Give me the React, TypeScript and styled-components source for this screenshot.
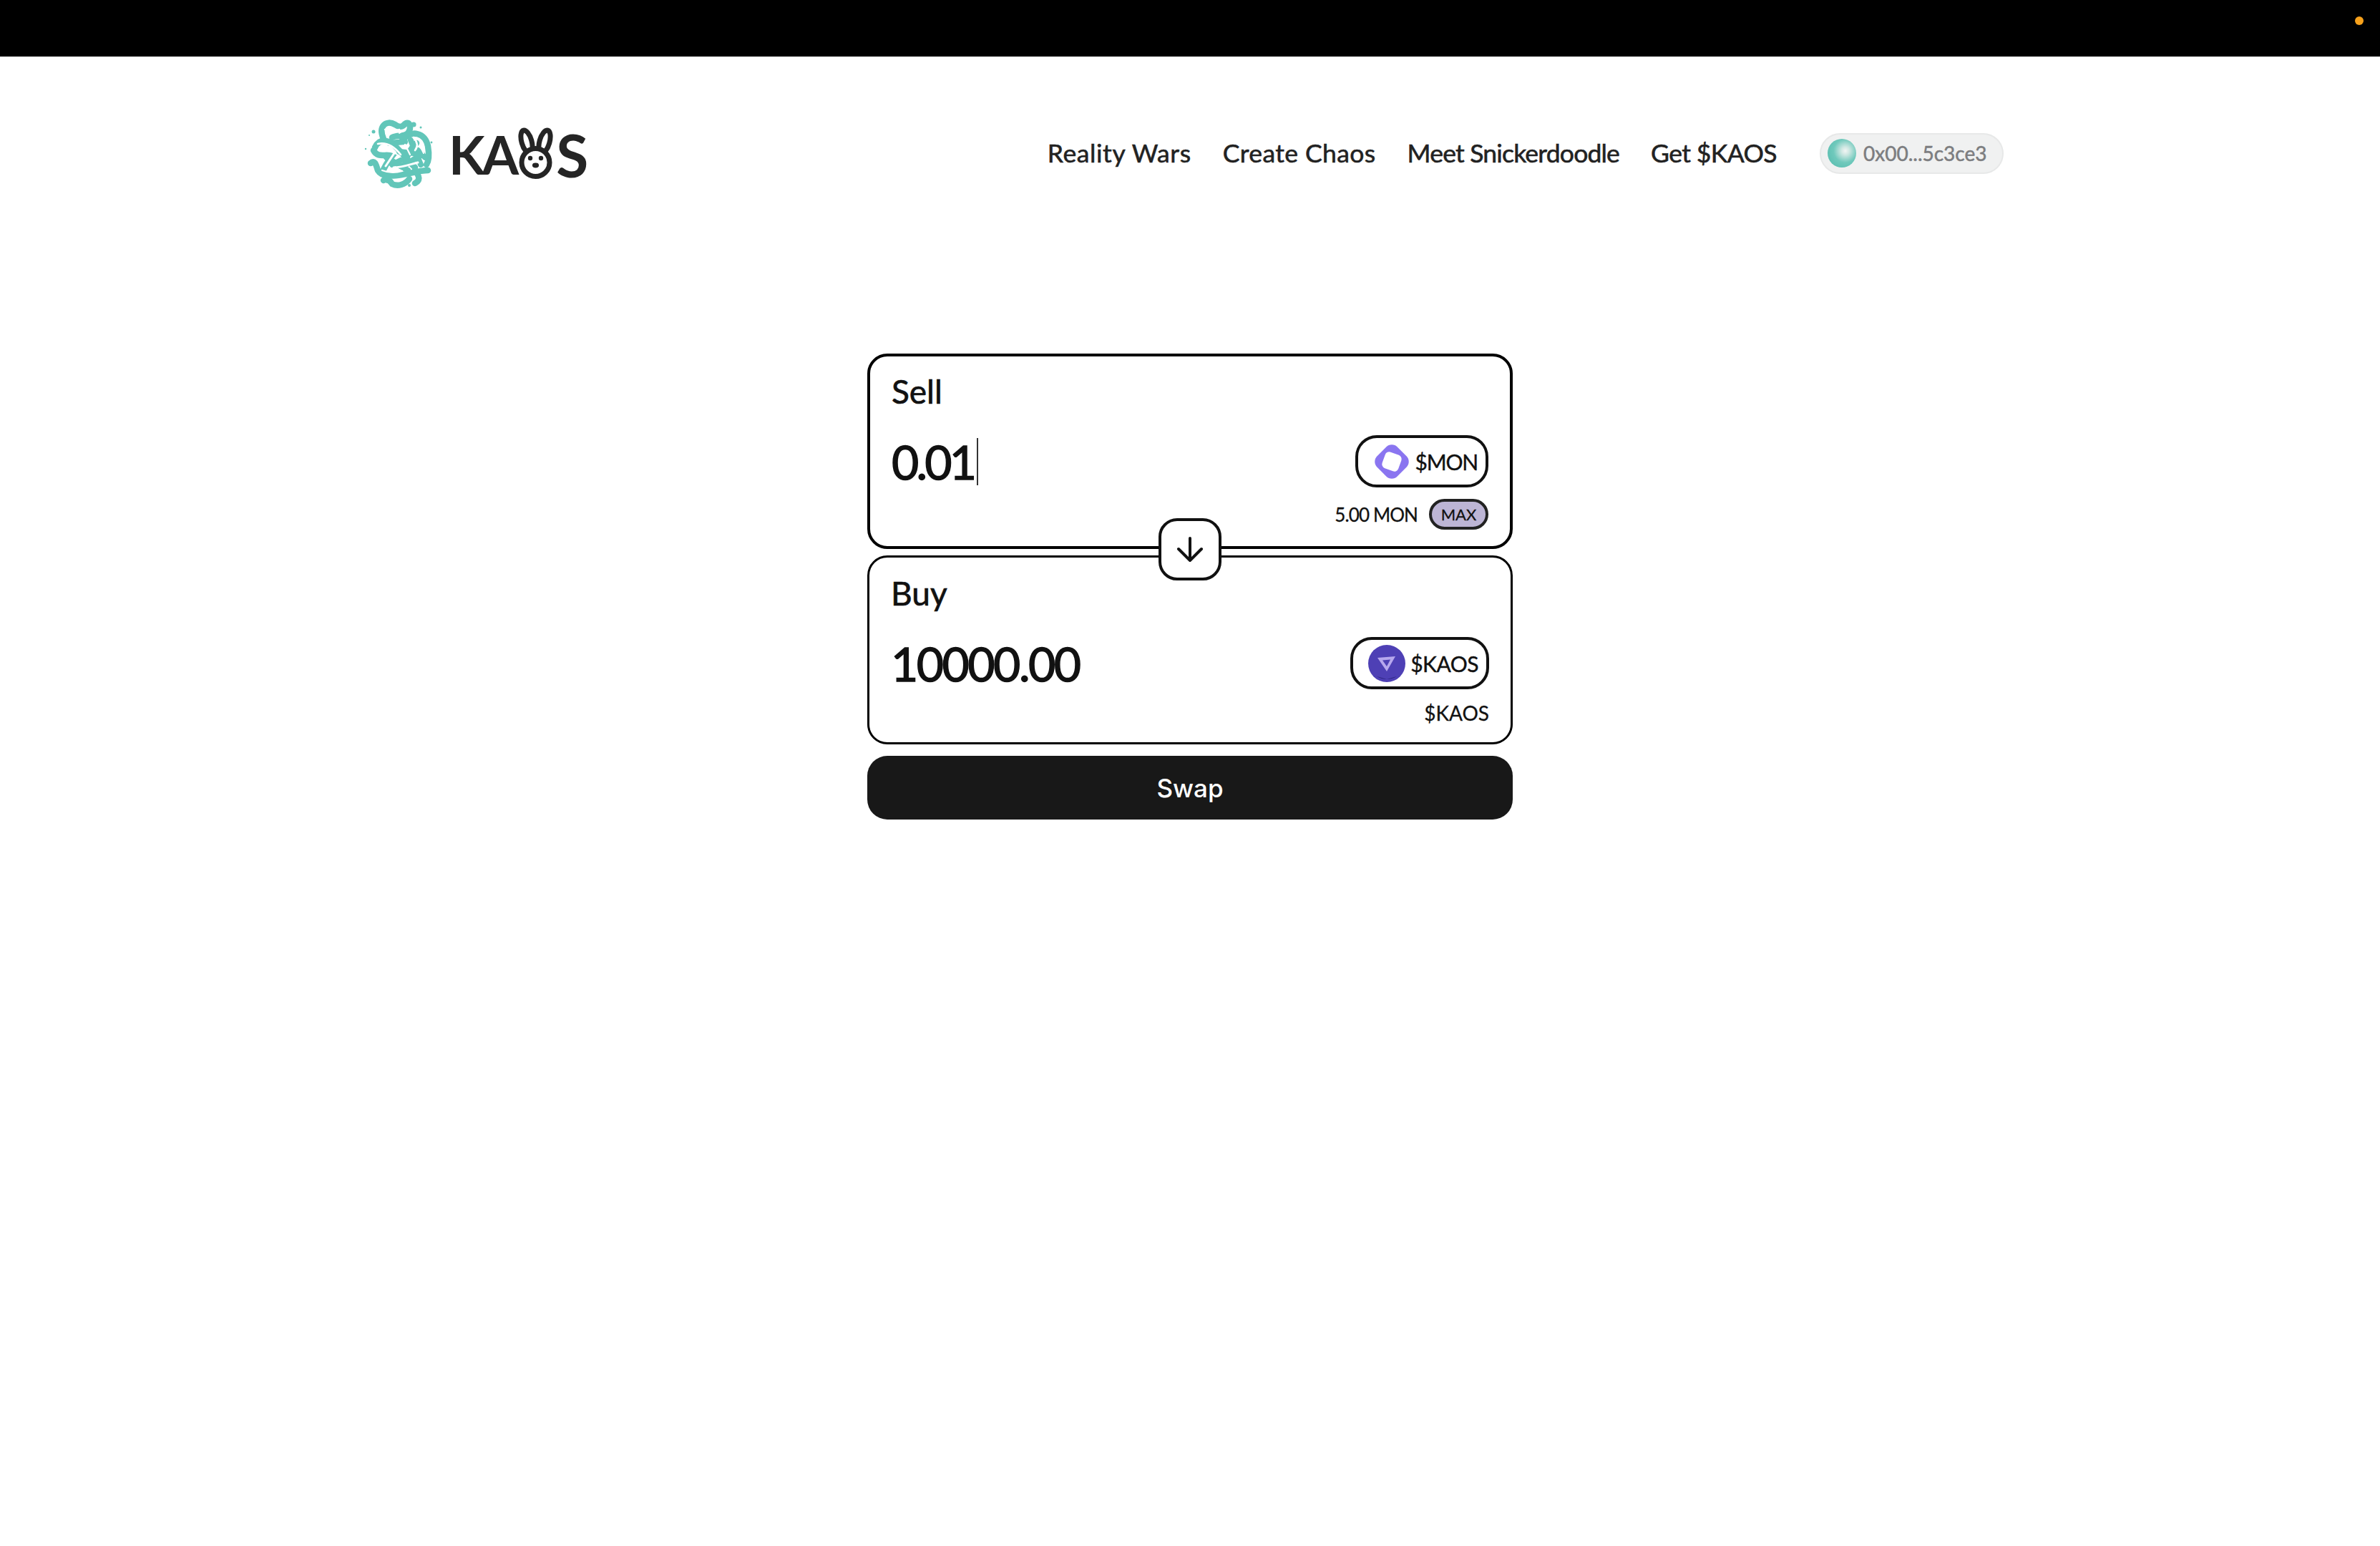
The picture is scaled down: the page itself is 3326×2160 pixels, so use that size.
import React from "react";
import styled, { createGlobalStyle } from "styled-components";

const GlobalStyle = createGlobalStyle`
	html, body {
		margin: 0;
		background: #fff;
		color: #111;
		font-family: "Lato", "Open Sans", sans-serif;
	}
	* {
		box-sizing: border-box;
	}
`;

const TopBar = styled.div`
	height: 79px;
	background: #000;
	display: flex;
	justify-content: flex-end;
	padding: 23px 23px 0 0;
`;

const StatusDot = styled.span`
	width: 12px;
	height: 12px;
	border-radius: 50%;
	background: #f7a11b;
`;

const Header = styled.header`
	display: flex;
	align-items: center;
	justify-content: space-between;
	padding: 86px 526px 0 500px;
`;

const Brand = styled.a`
	display: flex;
	align-items: center;
	height: 98px;
	color: #252525;
`;

const WordMark = styled.div`
	display: flex;
	align-items: flex-end;
	margin-left: 7px;
	height: 72px;
`;

const LogoLetters = styled.span<{ $size: number }>`
	font-family: "Lato", sans-serif;
	font-weight: 700;
	font-size: ${(p) => p.$size}px;
	line-height: 68px;
	letter-spacing: -4px;
	height: 68px;
`;

const Nav = styled.nav`
	display: flex;
	align-items: center;
	gap: 44px;
`;

const NavLink = styled.a<{ $track: number }>`
	font-size: 35.5px;
	font-weight: 400;
	letter-spacing: ${(p) => p.$track}px;
	color: #222;
	line-height: 44px;
	-webkit-text-stroke: 0.6px #222;
`;

const WalletPill = styled.button`
	display: flex;
	align-items: center;
	gap: 10px;
	width: 257px;
	height: 57px;
	margin-left: 16px;
	padding: 0 9px;
	border: 2px solid #e7e8e8;
	border-radius: 29px;
	background: #f0f1f1;
	color: #7c7d80;
	font-family: inherit;
	font-size: 28px;
	-webkit-text-stroke: 0.5px #7c7d80;
`;

const WalletAvatar = styled.span`
	width: 40px;
	height: 40px;
	border-radius: 50%;
	background: radial-gradient(circle at 62% 42%, #f2f5f4 0, #d0e8e3 16%, #70c9bc 48%, #4fb9ab 100%);
`;

const Main = styled.main`
	width: 902px;
	margin: 231px 0 0 1212px;
	display: flex;
	flex-direction: column;
	position: relative;
`;

const Card = styled.section<{ $border: number }>`
	display: flex;
	flex-direction: column;
	border: ${(p) => p.$border}px solid #000;
	border-radius: 28px;
	padding: ${(p) => 30 - p.$border}px 30px ${(p) => 27 - p.$border}px;
	background: #fff;
`;

const CardLabel = styled.div`
	font-size: 46px;
	line-height: 46px;
	color: #111;
	-webkit-text-stroke: 0.7px #111;
`;

const InputRow = styled.div`
	display: flex;
	align-items: center;
	justify-content: space-between;
	margin-top: 38px;
	height: 73px;
`;

const Amount = styled.div<{ $track: number }>`
	display: flex;
	align-items: center;
	font-size: 66px;
	line-height: 66px;
	letter-spacing: ${(p) => p.$track}px;
	color: #111;
	-webkit-text-stroke: 1.4px #111;
`;

const Caret = styled.span`
	width: 2px;
	height: 66px;
	margin-left: 4px;
	background: #333;
`;

const TokenPill = styled.button<{ $track: number }>`
	display: flex;
	align-items: center;
	gap: 7px;
	height: 73px;
	padding: 0 11px 0 21px;
	border: 4px solid #111;
	border-radius: 30px;
	background: #fff;
	color: #111;
	font-family: inherit;
	font-size: 30px;
	letter-spacing: ${(p) => p.$track}px;
	-webkit-text-stroke: 0.4px #111;
`;

const BalanceRow = styled.div`
	display: flex;
	align-items: center;
	justify-content: flex-end;
	gap: 16px;
	margin-top: 16px;
	min-height: 34px;
	font-size: 28px;
	color: #111;
	-webkit-text-stroke: 0.3px #111;
`;

const BalanceAmount = styled.span`
	font-size: 26px;
	letter-spacing: -0.9px;
`;

const MaxButton = styled.button`
	width: 83px;
	height: 43px;
	padding: 0;
	border: 4px solid #222;
	border-radius: 22px;
	background: #bdb5d5;
	color: #111;
	font-family: inherit;
	font-size: 22px;
`;

const FlipButton = styled.button`
	position: absolute;
	left: 407px;
	top: 230px;
	width: 88px;
	height: 87px;
	display: flex;
	align-items: center;
	justify-content: center;
	padding: 0;
	border: 4px solid #111;
	border-radius: 26px;
	background: #fff;
`;

const SwapButton = styled.button`
	height: 89px;
	margin-top: 16px;
	border: none;
	border-radius: 28px;
	background: #181818;
	color: #fff;
	font-family: "Inter", sans-serif;
	font-size: 35px;
	font-weight: 500;
`;

const CardGap = styled.div`
	height: 9px;
`;

const SwirlLogo = () => (
	<svg width="120" height="120" viewBox="0 0 120 120" fill="none" strokeLinecap="round">
		<g stroke="#62c6b9" strokeWidth="8.5">
			<path d="M36 40 C28 22 40 13 52 20 C58 24 62 24 66 19 C72 14 76 24 70 32 C64 38 56 34 48 38" />
			<path d="M62 42 C76 26 94 32 98 50 C100 62 100 70 96 76" />
			<path d="M24 52 C30 38 44 42 52 50 C62 60 72 72 80 80" />
			<path d="M22 56 C28 68 40 60 48 64 C40 74 36 82 34 88" />
			<path d="M18 74 C24 68 26 78 28 84 C34 94 50 92 62 90 C74 88 88 84 98 84" />
			<path d="M36 98 C42 94 46 100 48 103 C56 107 66 104 72 96" />
			<path d="M82 46 C74 52 72 60 66 70" />
			<path d="M60 78 C72 76 80 66 90 62" />
			<path d="M80 84 C86 92 88 98 80 102" />
			<path d="M58 58 L78 60 M40 66 L70 84 M74 42 L88 76 M44 46 L66 44 M48 76 L60 70 M84 56 L94 66" strokeWidth="8" />
		</g>
		<g fill="#62c6b9">
			<circle cx="78" cy="20" r="3.6" />
			<circle cx="22" cy="30" r="2.5" />
			<circle cx="88" cy="24" r="1.5" />
			<circle cx="72" cy="105" r="2" />
			<circle cx="41" cy="100" r="2" />
			<circle cx="103" cy="45" r="1.4" />
			<circle cx="11" cy="54" r="1.2" />
			<circle cx="16" cy="35" r="1" />
		</g>
		<g stroke="#fff" strokeWidth="2.6">
			<path d="M28 47 C42 44 52 52 60 62" />
			<path d="M51 60 L39 78" strokeWidth="3" />
			<path d="M50 80 C62 80 72 76 84 73" strokeWidth="3" />
			<path d="M78 38 C83 44 85 50 80 56" />
			<path d="M38 27 C44 24 50 30 58 27" strokeWidth="2.4" />
			<path d="M66 48 L73 62" strokeWidth="2.2" />
			<path d="M34 84 C44 88 52 88 62 85" strokeWidth="2.2" />
			<path d="M88 52 L92 60 M58 32 L64 28" strokeWidth="2" />
		</g>
	</svg>
);

const BunnyO = () => (
	<svg width="56" height="72" viewBox="0 0 56 72">
		<g stroke="#252525" strokeWidth="7" fill="#fff">
			<ellipse cx="15" cy="20" rx="7" ry="16.5" transform="rotate(-16 15 20)" />
			<ellipse cx="40" cy="20" rx="7" ry="16.5" transform="rotate(16 40 20)" />
			<circle cx="27.5" cy="49" r="19.5" />
		</g>
		<g fill="#252525">
			<circle cx="20" cy="43" r="3.2" />
			<circle cx="35" cy="43" r="3.2" />
			<ellipse cx="27.5" cy="53" rx="4.6" ry="3.4" />
		</g>
	</svg>
);

const MonIcon = () => (
	<svg width="52" height="52" viewBox="0 0 52 52">
		<rect x="6" y="6" width="40" height="40" rx="11" fill="#8a75f0" transform="rotate(45 26 26)" />
		<rect x="14" y="14" width="24" height="24" rx="6" fill="#fff" transform="rotate(20 26 26)" />
	</svg>
);

const KaosIcon = () => (
	<svg width="52" height="52" viewBox="0 0 52 52">
		<circle cx="26" cy="26" r="26" fill="#4e40b5" />
		<path d="M40 44 A26 26 0 0 1 12 44 L26 48 Z" fill="#2d2580" />
		<path d="M13 18 L38 16 L26 37 Z M20 21.5 L26 30 L31 20.5 Z" fill="#b7a8ee" fillRule="evenodd" />
	</svg>
);

const ArrowDown = () => (
	<svg width="40" height="40" viewBox="0 0 40 40" fill="none" stroke="#111" strokeWidth="4" strokeLinecap="round" strokeLinejoin="round">
		<path d="M20 4 L20 35 M4 19 L20 35 L36 19" />
	</svg>
);

const navItems = [
	{ label: "Reality Wars", track: 0.6 },
	{ label: "Create Chaos", track: 0.4 },
	{ label: "Meet Snickerdoodle", track: -0.8 },
	{ label: "Get $KAOS", track: -0.6 },
];

export default function App() {
	return (
		<>
			<GlobalStyle />
			<TopBar>
				<StatusDot />
			</TopBar>
			<Header>
				<Brand>
					<SwirlLogo />
					<WordMark>
						<LogoLetters $size={74}>KA</LogoLetters>
						<BunnyO />
						<LogoLetters $size={82}>S</LogoLetters>
					</WordMark>
				</Brand>
				<Nav>
					{navItems.map((item) => (
						<NavLink key={item.label} $track={item.track}>
							{item.label}
						</NavLink>
					))}
					<WalletPill>
						<WalletAvatar />
						0x00...5c3ce3
					</WalletPill>
				</Nav>
			</Header>
			<Main>
				<Card $border={4}>
					<CardLabel>Sell</CardLabel>
					<InputRow>
						<Amount $track={-3.8}>
							0.01
							<Caret />
						</Amount>
						<TokenPill $track={-1.2}>
							<MonIcon />
							$MON
						</TokenPill>
					</InputRow>
					<BalanceRow>
						<BalanceAmount>5.00 MON</BalanceAmount>
						<MaxButton>MAX</MaxButton>
					</BalanceRow>
				</Card>
				<CardGap />
				<Card $border={3}>
					<CardLabel>Buy</CardLabel>
					<InputRow>
						<Amount $track={-2.5}>10000.00</Amount>
						<TokenPill $track={-0.5}>
							<KaosIcon />
							$KAOS
						</TokenPill>
					</InputRow>
					<BalanceRow>$KAOS</BalanceRow>
				</Card>
				<FlipButton>
					<ArrowDown />
				</FlipButton>
				<SwapButton>Swap</SwapButton>
			</Main>
		</>
	);
}
